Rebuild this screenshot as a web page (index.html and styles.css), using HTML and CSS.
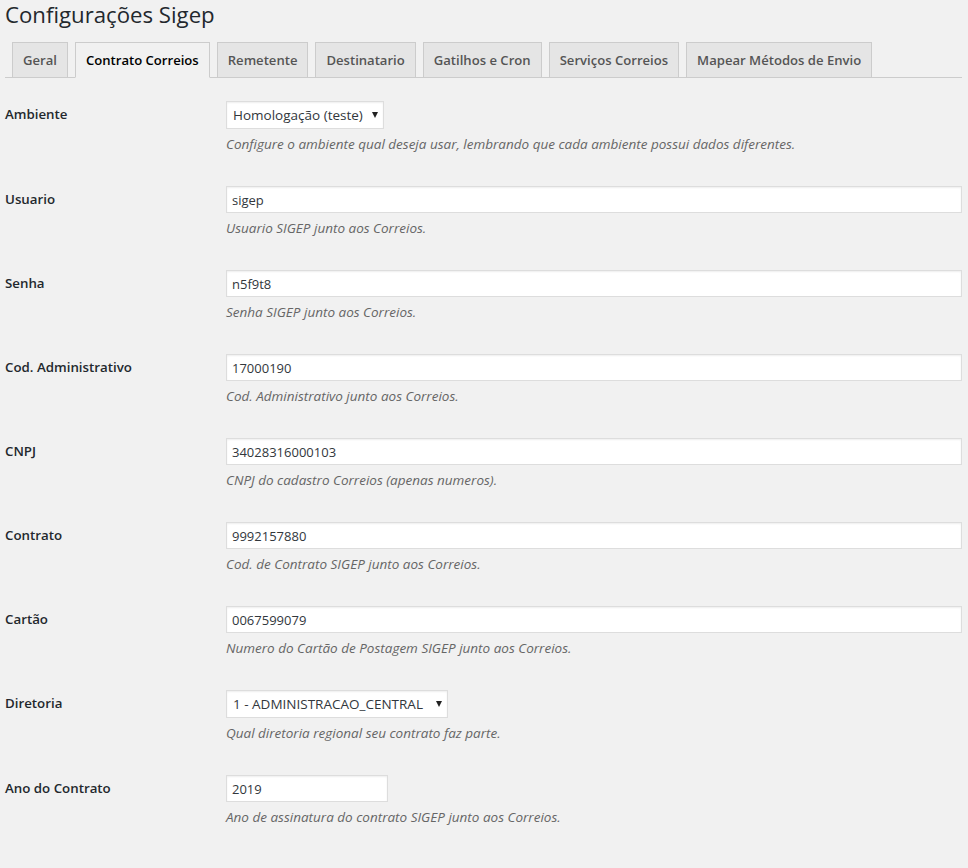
FILE: index.html
```html
<!DOCTYPE html>
<html lang="pt-BR">
<head>
<meta charset="utf-8">
<title>Configurações Sigep</title>
<link rel="stylesheet" href="styles.css">
</head>
<body>
<div class="wrap">
  <h1 class="page-title">Configurações Sigep</h1>
  <nav class="tabs">
    <a class="tab" href="#">Geral</a>
    <a class="tab tab-active" href="#">Contrato Correios</a>
    <a class="tab" href="#">Remetente</a>
    <a class="tab" href="#">Destinatario</a>
    <a class="tab" href="#">Gatilhos e Cron</a>
    <a class="tab" href="#">Serviços Correios</a>
    <a class="tab" href="#">Mapear Métodos de Envio</a>
  </nav>
  <form class="form">
    <div class="row row-select">
      <label class="label">Ambiente</label>
      <div class="field">
        <span class="select select-env"><select><option>Homologação (teste)</option><option>Produção</option></select></span>
        <p class="desc">Configure o ambiente qual deseja usar, lembrando que cada ambiente possui dados diferentes.</p>
      </div>
    </div>
    <div class="row">
      <label class="label">Usuario</label>
      <div class="field">
        <input class="text" type="text" value="sigep">
        <p class="desc">Usuario SIGEP junto aos Correios.</p>
      </div>
    </div>
    <div class="row">
      <label class="label">Senha</label>
      <div class="field">
        <input class="text" type="text" value="n5f9t8">
        <p class="desc">Senha SIGEP junto aos Correios.</p>
      </div>
    </div>
    <div class="row">
      <label class="label">Cod. Administrativo</label>
      <div class="field">
        <input class="text" type="text" value="17000190">
        <p class="desc">Cod. Administrativo junto aos Correios.</p>
      </div>
    </div>
    <div class="row">
      <label class="label">CNPJ</label>
      <div class="field">
        <input class="text" type="text" value="34028316000103">
        <p class="desc">CNPJ do cadastro Correios (apenas numeros).</p>
      </div>
    </div>
    <div class="row">
      <label class="label">Contrato</label>
      <div class="field">
        <input class="text" type="text" value="9992157880">
        <p class="desc">Cod. de Contrato SIGEP junto aos Correios.</p>
      </div>
    </div>
    <div class="row">
      <label class="label">Cartão</label>
      <div class="field">
        <input class="text" type="text" value="0067599079">
        <p class="desc">Numero do Cartão de Postagem SIGEP junto aos Correios.</p>
      </div>
    </div>
    <div class="row row-select">
      <label class="label">Diretoria</label>
      <div class="field">
        <span class="select select-dir"><select><option>1 - ADMINISTRACAO_CENTRAL</option></select></span>
        <p class="desc">Qual diretoria regional seu contrato faz parte.</p>
      </div>
    </div>
    <div class="row">
      <label class="label">Ano do Contrato</label>
      <div class="field">
        <input class="text text-small" type="text" value="2019">
        <p class="desc">Ano de assinatura do contrato SIGEP junto aos Correios.</p>
      </div>
    </div>
  </form>
</div>
</body>
</html>
```

FILE: styles.css
```css
html, body {
  margin: 0;
  padding: 0;
  background: #f1f1f1;
}

body {
  font-family: "Open Sans", "Noto Sans", sans-serif;
  color: #23282d;
  font-size: 13px;
}

.wrap {
  padding: 0 6px 0 5px;
}

.page-title {
  margin: 0;
  padding: 0;
  font-size: 22.2px;
  font-weight: 400;
  line-height: 30px;
  color: #23282d;
}

.tabs {
  display: flex;
  padding: 12px 0 0 0;
  border-bottom: 1px solid #ccc;
}

.tab {
  display: block;
  margin-left: 7px;
  margin-bottom: -1px;
  padding: 5px 10px;
  border: 1px solid #ccc;
  background: #e5e5e5;
  color: #555;
  font-size: 13.1px;
  font-weight: 600;
  line-height: 24px;
  text-decoration: none;
  white-space: nowrap;
}

.tab-active {
  background: #f1f1f1;
  border-bottom-color: #f1f1f1;
  color: #000;
}

.form {
  margin: 8px 0 0 0;
}

.row {
  display: grid;
  grid-template-columns: 221px 1fr;
}

.label {
  padding-top: 19px;
  font-size: 13.3px;
  font-weight: 600;
  line-height: 18px;
  color: #23282d;
}

.field {
  padding: 15px 0 17px 0;
}

.text {
  display: block;
  box-sizing: border-box;
  width: 100%;
  height: 27px;
  margin: 0;
  padding: 0 5px;
  border: 1px solid #ddd;
  box-shadow: inset 0 1px 2px rgba(0, 0, 0, 0.07);
  background: #fff;
  color: #32373c;
  font-family: inherit;
  font-size: 13px;
  outline: none;
}

.text-small {
  width: 162px;
}

.select {
  position: relative;
  display: block;
}

.select select {
  display: block;
  box-sizing: border-box;
  height: 28px;
  margin: 0;
  padding: 0 18px 0 6px;
  border: 1px solid #ddd;
  border-radius: 0;
  box-shadow: inset 0 1px 2px rgba(0, 0, 0, 0.07);
  background: #fff;
  color: #32373c;
  font-family: inherit;
  font-size: 13.5px;
  -webkit-appearance: none;
  appearance: none;
  outline: none;
}

.select-env select {
  width: 158px;
}

.select-dir select {
  width: 222px;
}

.select::after {
  content: "";
  position: absolute;
  top: 11px;
  width: 0;
  height: 0;
  border-left: 3px solid transparent;
  border-right: 3px solid transparent;
  border-top: 6px solid #222;
}

.select-env::after {
  left: 146px;
}

.select-dir::after {
  left: 210px;
}

.desc {
  margin: 5px 0 0 0;
  font-size: 13.5px;
  font-style: italic;
  line-height: 20px;
  color: #666;
}
```
